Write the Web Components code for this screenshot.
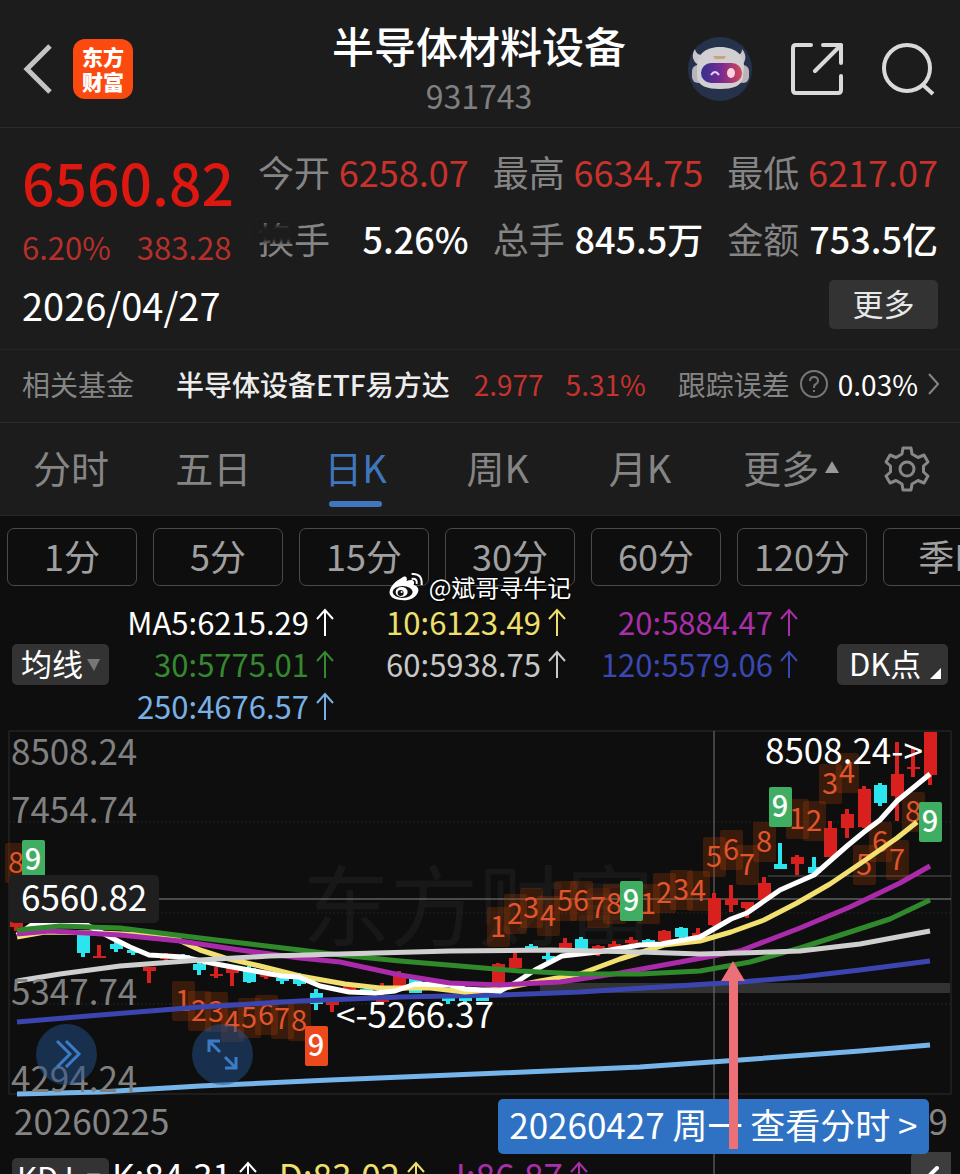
<!DOCTYPE html>
<html lang="zh-CN">
<head>
<meta charset="utf-8">
<meta name="viewport" content="width=device-width, initial-scale=1">
<title>半导体材料设备 931743</title>
<style>
    :root {
        --panel: #1c1c1c;
        --ground: #0e0e0e;
        --line: #2b2b2b;
        --muted: #858585;
        --red: #c8322c;
        --blue: #3f76bd;
        --text-s: 28px;
        --text-m: 31px;
        --text-l: 35px;
    }

    html {
        height: 100%;
        background: var(--ground);
    }

    body {
        margin: 0;
        height: 100%;
        overflow: hidden;
        color: #fff;
        font-family: "Noto Sans CJK SC", sans-serif;
    }
</style>
</head>
<body>
<stock-page></stock-page>

<script>
const base = `
    *, *::before, *::after { box-sizing: border-box; }
    button, select {
        margin: 0;
        padding: 0;
        border: 0;
        background: none;
        color: inherit;
        font: inherit;
        appearance: none;
        cursor: pointer;
    }
    a { color: inherit; text-decoration: none; }
    svg { display: block; }
`;

function define(name, html) {
    customElements.define(name, class extends HTMLElement {
        connectedCallback() {
            if (this.shadowRoot) return;
            const shadow = this.attachShadow({ mode: "open" });
            shadow.innerHTML = `<style>${base}</style>${html}`;
        }
    });
}

define("app-header", `
    <style>
        :host {
            display: grid;
            grid-template-columns: 1fr auto 1fr;
            align-items: center;
            height: 128px;
            padding: 0 25px 0 23px;
            background: var(--panel);
            border-bottom: 1px solid var(--line);
        }
        .side { display: flex; align-items: center; padding-top: 10px; }
        .left { gap: 21px; }
        .right { justify-content: flex-end; gap: 38px; }
        .logo {
            display: grid;
            place-content: center;
            width: 60px;
            height: 60px;
            border-radius: 12px;
            background: #fb4a10;
            font-size: 21px;
            font-weight: 900;
            line-height: 25px;
            text-align: center;
        }
        .title { padding-top: 6px; text-align: center; }
        h1 { margin: 0; font-size: 42px; font-weight: 500; line-height: 56px; }
        p { margin: 0; color: #808080; font-size: 32px; line-height: 44px; }
    </style>
    <div class="side left">
        <button aria-label="返回">
            <svg width="29" height="50" viewBox="0 0 29 50" fill="none" stroke="#c4c4c4" stroke-width="5"><path d="M27 2 4 25 27 48"/></svg>
        </button>
        <a class="logo" href="#">东方<br>财富</a>
    </div>
    <div class="title">
        <h1><slot name="name"></slot></h1>
        <p><slot name="code"></slot></p>
    </div>
    <div class="side right">
        <button aria-label="助手">
            <svg width="66" height="66" viewBox="0 0 66 66">
                <defs><linearGradient id="visor"><stop offset="0" stop-color="#33308f"/><stop offset=".5" stop-color="#7a2a90"/><stop offset="1" stop-color="#d24858"/></linearGradient></defs>
                <circle cx="33" cy="33" r="32" fill="#263249"/>
                <path d="M8 13C4 19 6 25 10 28L19 19C13 20 9 18 8 13ZM55 13C60 19 59 25 55 29L46 19C52 20 55 18 55 13Z" fill="#c9c5cb"/>
                <rect x="5" y="29" width="12" height="18" rx="6" fill="#b9b4ba"/>
                <rect x="50" y="29" width="12" height="18" rx="6" fill="#b9b4ba"/>
                <path d="M10 31C10 17 20 11 33 11S57 17 57 31L56 41C55 50 46 53 33 53S11 50 10 41Z" fill="#d2cfd2"/>
                <path d="M26 20h13l-2 3h-9Z" fill="#c9a37e"/>
                <rect x="14" y="27" width="41" height="20" rx="10" fill="url(#visor)"/>
                <path d="M24 39Q28 33 32 39" fill="none" stroke="#d9d6ff" stroke-width="2"/>
                <ellipse cx="44" cy="37" rx="4" ry="5" fill="#ffd3dc"/>
            </svg>
        </button>
        <button aria-label="分享">
            <svg width="52" height="52" viewBox="0 0 52 52" fill="none" stroke="#dadada" stroke-width="4" stroke-linecap="round" stroke-linejoin="round"><path d="M20 2H5Q2 2 2 5V47Q2 50 5 50H47Q50 50 50 47V33M32 2H50V20M50 2 24 28"/></svg>
        </button>
        <button aria-label="搜索">
            <svg width="54" height="54" viewBox="0 0 54 54" fill="none" stroke="#dadada" stroke-width="4"><circle cx="26" cy="26" r="23"/><path d="M41 42 52 52"/></svg>
        </button>
    </div>
`);

define("quote-stat", `
    <style>
        :host {
            display: flex;
            justify-content: space-between;
            font-size: 36px;
            line-height: 46px;
            white-space: nowrap;
        }
        .label { position: relative; color: var(--muted); }
        .value { font-weight: 500; }
        :host([up]) .value { color: var(--red); font-weight: 400; }
        /* smudge over the first character */
        :host([smudged]) .label::after {
            content: "";
            position: absolute;
            inset: 10px 36px 19px 0;
            background: var(--panel);
            filter: blur(2px);
        }
    </style>
    <span class="label"><slot name="label"></slot></span>
    <span class="value"><slot></slot></span>
`);

define("quote-panel", `
    <style>
        :host {
            display: grid;
            gap: 11px;
            padding: 20px 22px;
            background: var(--panel);
            border-bottom: 1px solid #242424;
        }
        .top { display: grid; grid-template-columns: 212px 1fr; gap: 24px; }
        .price { color: #dc1810; font-size: 57px; font-weight: 500; line-height: 66px; }
        .change {
            display: flex;
            gap: 26px;
            margin-top: 11px;
            color: #b5302b;
            font-size: var(--text-m);
            line-height: 44px;
        }
        .stats {
            display: grid;
            grid-template-columns: repeat(3, 1fr);
            gap: 21px 24px;
            align-content: start;
        }
        .bottom { display: flex; justify-content: space-between; align-items: center; }
        time { font-size: 38px; line-height: 48px; }
        button {
            width: 109px;
            height: 49px;
            padding-bottom: 4px;
            border-radius: 5px;
            background: #333;
            color: #e8e8e8;
            font-size: var(--text-m);
            line-height: 45px;
        }
    </style>
    <div class="top">
        <div>
            <div class="price">6560.82</div>
            <div class="change"><span>6.20%</span><span>383.28</span></div>
        </div>
        <div class="stats">
            <quote-stat up><span slot="label">今开</span>6258.07</quote-stat>
            <quote-stat up><span slot="label">最高</span>6634.75</quote-stat>
            <quote-stat up><span slot="label">最低</span>6217.07</quote-stat>
            <quote-stat smudged><span slot="label">换手</span>5.26%</quote-stat>
            <quote-stat><span slot="label">总手</span>845.5万</quote-stat>
            <quote-stat><span slot="label">金额</span>753.5亿</quote-stat>
        </div>
    </div>
    <div class="bottom">
        <time datetime="2026-04-27">2026/04/27</time>
        <button>更多</button>
    </div>
`);

define("fund-row", `
    <style>
        :host {
            display: block;
            background: var(--panel);
            border-bottom: 1px solid var(--line);
            font-size: var(--text-s);
        }
        a {
            display: flex;
            align-items: center;
            justify-content: space-between;
            height: 72px;
            padding: 0 21px 4px 22px;
            line-height: 40px;
            white-space: nowrap;
        }
        .label { color: var(--muted); }
        .name { padding-left: 18px; color: #ededed; font-weight: 500; }
        .up { display: flex; gap: 22px; color: var(--red); }
        .track { display: flex; align-items: center; gap: 10px; padding-left: 8px; }
    </style>
    <a href="#">
        <span class="label">相关基金</span>
        <span class="name">半导体设备ETF易方达</span>
        <span class="up"><span>2.977</span><span>5.31%</span></span>
        <span class="track">
            <span class="label">跟踪误差</span>
            <svg width="28" height="28" viewBox="0 0 28 28" fill="none" stroke="#777" stroke-width="2"><circle cx="14" cy="14" r="13"/><path d="M10 11Q10 7 14 7T18 11Q18 13 16 14T14 17V18M14 20V22"/></svg>
            <span>0.03%</span>
            <svg width="11" height="22" viewBox="0 0 11 22" fill="none" stroke="#858585" stroke-width="2"><path d="M1 1 10 11 1 21"/></svg>
        </span>
    </a>
`);

define("period-tabs", `
    <style>
        :host {
            display: block;
            background: var(--panel);
            border-bottom: 1px solid #262626;
            color: var(--muted);
            font-size: 38px;
        }
        nav {
            display: grid;
            grid-template-columns: repeat(6, 4fr) 3fr;
            height: 92px;
        }
        button {
            display: flex;
            justify-content: center;
            align-items: center;
            line-height: 50px;
            padding-bottom: 4px;
        }
        .current { position: relative; color: var(--blue); }
        .current::after {
            content: "";
            position: absolute;
            bottom: 8px;
            width: 53px;
            height: 6px;
            border-radius: 3px;
            background: var(--blue);
        }
        .more { gap: 6px; padding-left: 18px; }
        .gear { padding-bottom: 0; }
    </style>
    <nav>
        <button>分时</button>
        <button>五日</button>
        <button class="current" aria-current="true">日K</button>
        <button>周K</button>
        <button>月K</button>
        <button class="more">更多<svg width="14" height="12" viewBox="0 0 14 12" fill="#999"><path d="M7 0 14 12H0Z"/></svg></button>
        <button class="gear" aria-label="设置">
            <svg width="46" height="46" viewBox="0 0 46 46" fill="none" stroke="#888" stroke-width="3" stroke-linejoin="round"><path d="M19 2H27L28 8 34 11.500 40 9 44 16 39.500 20V26L44 30 40 37 34 34.500 28 38 27 44H19L18 38 12 34.500 6 37 2 30 6.500 26V20L2 16 6 9 12 11.500 18 8Z"/><circle cx="23" cy="23" r="7"/></svg>
        </button>
    </nav>
`);

define("minute-chips", `
    <style>
        :host { display: block; position: relative; }
        .chips {
            display: flex;
            gap: 16px;
            padding: 12px 0 0 7px;
            overflow: hidden;
        }
        button {
            flex: 0 0 130px;
            height: 58px;
            padding-bottom: 4px;
            border: 1px solid #4a4a4a;
            border-radius: 7px;
            color: #a0a0a0;
            font-size: 36px;
            line-height: 52px;
            white-space: nowrap;
        }
        .credit {
            position: absolute;
            left: 50%;
            bottom: -16px;
            transform: translateX(-50%);
            display: flex;
            align-items: center;
            gap: 4px;
            font-size: 24px;
            line-height: 30px;
            white-space: nowrap;
            text-shadow: 0 0 2px #000, 0 1px 2px #000;
        }
    </style>
    <div class="chips">
        <button>1分</button>
        <button>5分</button>
        <button>15分</button>
        <button>30分</button>
        <button>60分</button>
        <button>120分</button>
        <button>季K</button>
    </div>
    <div class="credit">
        <svg width="36" height="30" viewBox="0 0 36 30">
            <path d="M13 6C17 3 19 5 18 9C23 7 27 8 25 13C29 14 31 17 29 21C26 27 19 29 13 28C5 28 0 24 1 19C2 14 7 9 13 6Z" fill="#fff"/>
            <ellipse cx="14" cy="20" rx="10" ry="6" fill="#111"/>
            <ellipse cx="13" cy="20" rx="6" ry="5" fill="#fff"/>
            <circle cx="12" cy="21" r="3" fill="#111"/>
            <circle cx="13" cy="20" r="1" fill="#fff"/>
            <path d="M23 2Q34 1 33 13M23 7Q29 6 28 12" fill="none" stroke="#fff" stroke-width="2"/>
        </svg>
        <span>@斌哥寻牛记</span>
    </div>
`);

define("up-value", `
    <style>
        :host { display: flex; align-items: center; gap: 7px; white-space: nowrap; }
    </style>
    <slot></slot>
    <svg width="18" height="28" viewBox="0 0 18 28" fill="none" stroke="currentColor" stroke-width="2"><path d="M9 28V2M1 11 9 2 17 11"/></svg>
`);

customElements.define("drop-down", class extends HTMLElement {
    connectedCallback() {
        const shadow = this.attachShadow({ mode: "open" });
        shadow.innerHTML = `
            <style>
                ${base}
                :host { display: block; position: relative; width: 97px; }
                select {
                    display: block;
                    width: 100%;
                    height: 41px;
                    padding: 0 0 4px 9px;
                    border-radius: 5px;
                    background: #333;
                    font-size: var(--text-m);
                    line-height: 37px;
                }
                svg { position: absolute; right: 9px; top: 15px; pointer-events: none; }
                :host([tight]) select { padding-left: 5px; }
            </style>
            <select aria-label="指标"><option>${this.getAttribute("value")}</option></select>
            <svg width="13" height="12" viewBox="0 0 13 12" fill="#777"><path d="M0 0H13L7 12Z"/></svg>
        `;
    }
});

define("ma-legend", `
    <style>
        :host {
            display: grid;
            grid-template-columns: 97px 1fr 111px;
            align-items: center;
            padding: 15px 12px 4px;
            font-size: var(--text-m);
        }
        .values {
            display: grid;
            grid-template-columns: 225px 1fr 1fr;
            padding-right: 39px;
            line-height: 42px;
        }
        up-value { justify-content: flex-end; }
        button {
            display: flex;
            align-items: center;
            gap: 9px;
            height: 41px;
            padding: 0 5px 3px 12px;
            border-radius: 5px;
            background: #333;
            line-height: 38px;
            white-space: nowrap;
        }
        button svg { align-self: flex-end; margin-bottom: 3px; }
    </style>
    <drop-down value="均线"></drop-down>
    <div class="values">
        <up-value>MA5:6215.29</up-value>
        <up-value style="color:#efe06c">10:6123.49</up-value>
        <up-value style="color:#a92fa9">20:5884.47</up-value>
        <up-value style="color:#35892f">30:5775.01</up-value>
        <up-value style="color:#c8c8c8">60:5938.75</up-value>
        <up-value style="color:#3a48b4">120:5579.06</up-value>
        <up-value style="color:#78b1e6">250:4676.57</up-value>
    </div>
    <button>DK点<svg width="11" height="11" viewBox="0 0 11 11" fill="#fff"><path d="M11 0V11H0Z"/></svg></button>
`);

// one row per candle: centre x, high, low, body top, body bottom, 1 for a falling day
const candles = [
    [16, 921, 931, 921, 927, 0], [83, 934, 957, 935, 953, 1], [99, 945, 958, 956, 958, 0],
    [116, 942, 952, 944, 949, 1], [133, 947, 955, 950, 953, 1], [149, 967, 983, 967, 971, 0],
    [166, 953, 963, 957, 959, 0], [183, 954, 960, 955, 959, 1], [199, 962, 975, 964, 970, 1],
    [216, 967, 978, 974, 976, 0], [232, 965, 986, 968, 973, 0], [249, 966, 983, 968, 982, 1],
    [266, 970, 979, 972, 977, 0], [282, 976, 984, 978, 981, 1], [299, 973, 986, 978, 984, 1],
    [316, 989, 1010, 993, 1004, 1], [332, 1002, 1012, 1002, 1005, 0], [349, 984, 990, 986, 990, 0],
    [366, 987, 995, 989, 994, 1], [382, 983, 1003, 1000, 1002, 0], [399, 971, 991, 974, 991, 0],
    [415, 977, 993, 978, 993, 1], [432, 978, 987, 980, 985, 1], [448, 996, 1004, 997, 1001, 1],
    [465, 996, 1002, 997, 1001, 1], [482, 996, 1001, 997, 1001, 1], [498, 963, 985, 964, 985, 0],
    [515, 953, 968, 958, 968, 0], [531, 944, 952, 946, 949, 1], [548, 951, 961, 956, 959, 1],
    [565, 938, 948, 943, 948, 0], [581, 937, 950, 939, 949, 1], [598, 945, 956, 946, 950, 0],
    [614, 941, 950, 944, 947, 0], [631, 937, 946, 940, 943, 0], [648, 939, 945, 940, 944, 1],
    [664, 930, 941, 931, 941, 0], [681, 927, 940, 928, 937, 1], [698, 928, 937, 933, 937, 0],
    [714, 893, 926, 898, 925, 0], [731, 885, 912, 899, 905, 0], [747, 902, 918, 902, 908, 0],
    [764, 877, 902, 883, 900, 0], [780, 843, 869, 864, 869, 1], [797, 855, 875, 857, 864, 0],
    [814, 857, 875, 867, 873, 1], [830, 821, 857, 828, 857, 0], [847, 809, 838, 814, 828, 0],
    [864, 786, 828, 789, 827, 0], [880, 783, 806, 785, 803, 1], [897, 742, 821, 774, 796, 0],
    [913, 748, 777, 767, 769, 0], [930, 732, 785, 732, 775, 0]
];

const averages = [
    ["#76b5ea", "17,1094 100,1092 200,1086 330,1080 500,1073 640,1067 740,1060 860,1051 930,1045"],
    ["#3b45b0", "17,1022 100,1015 200,1007 300,1001 400,997 500,995 580,992 660,987 740,982 800,977 860,970 930,961"],
    ["#f2e070", "17,937 45,932 100,933 170,936 200,950 225,958 260,966 300,976 345,984 380,988 430,988 465,992 500,989 540,981 580,974 620,959 664,945 700,941 731,932 764,920 797,903 830,884 864,861 897,838 917,822"],
    ["#fff", "17,935 33,924 85,924 112,938 130,947 149,955 183,957 216,964 249,970 282,976 299,977 320,986 349,992 375,993 395,991 415,984 450,985 465,989 500,991 515,983 535,970 562,956 598,952 640,945 661,944 700,937 731,919 747,913 780,890 814,875 847,846 864,832 880,820 897,801 930,774"],
    ["#a92ba9", "17,934 50,931 120,935 180,941 240,950 300,958 340,962 400,975 450,983 500,985 560,982 620,973 680,962 740,951 800,928 850,907 900,883 930,866"],
    ["#308a2c", "17,930 60,926 120,928 200,938 250,944 300,950 340,955 400,961 460,966 520,971 580,974 640,974 700,971 750,962 800,948 850,932 890,919 930,900"],
    ["#cfcfcf", "17,981 60,974 120,966 200,960 270,956 340,954 450,951 550,950 640,952 700,954 740,953 800,951 860,944 930,931"]
];

// nine-count marks: digit, centre x, centre y
const counts = [
    [8, 16, 863], [1, 183, 1001], [2, 199, 1011], [3, 216, 1012], [4, 232, 1022],
    [5, 249, 1018], [6, 266, 1015], [7, 282, 1019], [8, 299, 1021],
    [1, 498, 927], [2, 515, 914], [3, 531, 908], [4, 548, 916], [5, 565, 901],
    [6, 581, 901], [7, 598, 908], [8, 614, 904], [1, 648, 904], [2, 664, 893],
    [3, 681, 890], [4, 698, 891], [5, 714, 857], [6, 731, 850], [7, 747, 865],
    [8, 764, 842], [1, 797, 819], [2, 814, 821], [3, 830, 784], [4, 847, 773],
    [5, 864, 865], [6, 880, 842], [7, 897, 860], [8, 913, 812]
];
const nines = [
    [33, 860, "#3fae62"], [316, 1046, "#ec4a1c"], [631, 901, "#3fae62"],
    [780, 807, "#3fae62"], [930, 822, "#3fae62"]
];

const drawCandle = ([x, high, low, top, bottom, falls]) => {
    const color = falls ? "#2be4ee" : "#d8211f";
    return `<rect x="${x - 2}" y="${high}" width="4" height="${low - high}" fill="${color}"/>
        <rect x="${x - 6}" y="${top}" width="13" height="${bottom - top}" fill="${color}"/>`;
};

const drawCount = ([n, x, y]) => `
    <rect x="${x - 11}" y="${y - 20}" width="23" height="40" rx="2" fill="#a83c08" fill-opacity=".28"/>
    <text x="${x}" y="${y + 10}" class="count">${n}</text>`;

const drawNine = ([x, y, fill]) => `
    <rect x="${x - 11}" y="${y - 20}" width="23" height="40" rx="2" fill="${fill}"/>
    <text x="${x}" y="${y + 10}" class="nine">9</text>`;

define("kline-chart", `
    <style>
        :host { display: block; position: relative; }
        svg { width: 100%; overflow: visible; }
        text { fill: #fff; font-size: var(--text-l); }
        .axis { fill: #808080; }
        .count { fill: #e2552b; font-size: 29px; text-anchor: middle; }
        .nine { font-size: 29px; font-weight: 500; text-anchor: middle; }
        .brand { fill: #181818; font-size: 88px; }
        button {
            position: absolute;
            bottom: 10px;
            width: 61px;
            height: 61px;
            border-radius: 50%;
            background: rgba(34, 82, 140, .5);
        }
        .forward { left: 36px; }
        .expand { left: 192px; }
        .arrow { position: absolute; inset: 0; z-index: 2; pointer-events: none; }
    </style>
    <svg viewBox="0 731 960 364" role="img" aria-label="日K线图">
        <text x="302" y="939" class="brand">东方财富</text>
        <path d="M9 731H951V1094H9Z" fill="none" stroke="#2c2c2c"/>
        <path d="M9 822H951M9 913H951M9 1004H951" stroke="#222" stroke-dasharray="2 2"/>
        <rect x="540" y="983" width="410" height="10" fill="#333"/>
        <path d="M768 876H951" stroke="#555"/>
        <path d="M9 899H951" stroke="#888"/>
        <path d="M714 731V1174" stroke="#777"/>
        ${candles.map(drawCandle).join("")}
        ${counts.map(drawCount).join("")}
        <g fill="none" stroke-width="5" stroke-linejoin="round">
            ${averages.map(([color, points]) => `<polyline points="${points}" stroke="${color}"/>`).join("")}
        </g>
        ${nines.map(drawNine).join("")}
        <text x="11" y="765" class="axis">8508.24</text>
        <text x="11" y="823" class="axis">7454.74</text>
        <text x="11" y="1005" class="axis">5347.74</text>
        <text x="11" y="1092" class="axis">4294.24</text>
        <rect x="9" y="875" width="150" height="48" rx="5" fill="#1f1f1f"/>
        <text x="21" y="911">6560.82</text>
        <text x="765" y="764">8508.24-&gt;</text>
        <text x="336" y="1028">&lt;-5266.37</text>
    </svg>
    <button class="forward" aria-label="前进">
        <svg viewBox="0 0 61 61" fill="none" stroke="#3c7cc6" stroke-width="3"><path d="M21 17 34 30 21 43M30 17 43 30 30 43"/></svg>
    </button>
    <button class="expand" aria-label="全屏">
        <svg viewBox="0 0 61 61" fill="none" stroke="#3c7cc6" stroke-width="3"><path d="M17 28V17H28M17 17 28 28M44 33V44H33M44 44 33 33"/></svg>
    </button>
    <svg class="arrow" viewBox="0 731 960 364" aria-hidden="true">
        <path d="M733 961 745 981H738V1149H729V981H721Z" fill="#ec7077"/>
    </svg>
`);

define("date-bar", `
    <style>
        :host {
            display: flex;
            justify-content: space-between;
            align-items: flex-start;
            position: relative;
            padding: 4px 12px 4px 14px;
            color: #858585;
            font-size: var(--text-l);
            line-height: 42px;
        }
        .now { display: flex; }
        a {
            height: 55px;
            padding: 0 11px;
            border-radius: 5px;
            background: #2f72c4;
            color: #fff;
            line-height: 50px;
            white-space: nowrap;
        }
    </style>
    <span>20260225</span>
    <span class="now"><a href="#">20260427 周一 查看分时 &gt;</a>9</span>
`);

define("kdj-bar", `
    <style>
        :host {
            display: flex;
            align-items: flex-start;
            padding: 0 9px 0 12px;
            font-size: var(--text-l);
            line-height: 34px;
        }
        .values { display: flex; flex: 1; gap: 22px; padding-left: 3px; }
        button {
            width: 40px;
            height: 46px;
            margin-top: -6px;
            border-radius: 5px 0 0 0;
            background: #3d3d3d;
        }
    </style>
    <drop-down tight value="KDJ"></drop-down>
    <div class="values">
        <up-value>K:84.31</up-value>
        <up-value style="color:#efe06c">D:83.02</up-value>
        <up-value style="color:#a92fa9">J:86.87</up-value>
    </div>
    <button aria-label="收起">
        <svg width="40" height="46" viewBox="0 0 40 46" fill="none" stroke="#fff" stroke-width="4" stroke-linecap="round"><path d="M26 16 15 27 26 38"/></svg>
    </button>
`);

define("stock-page", `
    <style>
        :host { display: block; }
    </style>
    <app-header><span slot="name">半导体材料设备</span><span slot="code">931743</span></app-header>
    <quote-panel></quote-panel>
    <fund-row></fund-row>
    <period-tabs></period-tabs>
    <minute-chips></minute-chips>
    <ma-legend></ma-legend>
    <kline-chart></kline-chart>
    <date-bar></date-bar>
    <kdj-bar></kdj-bar>
`);
</script>
</body>
</html>
